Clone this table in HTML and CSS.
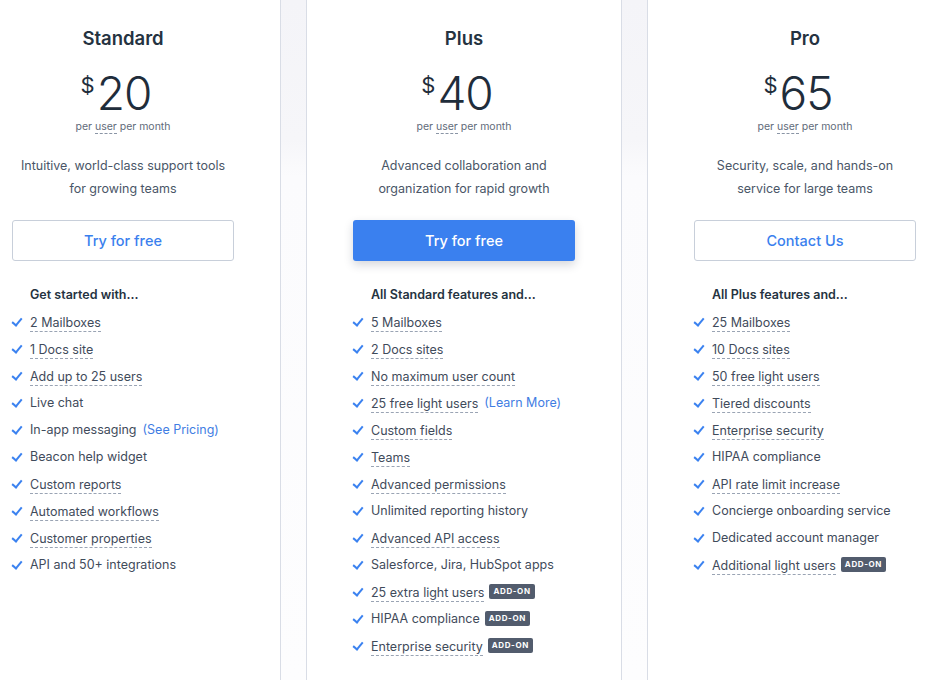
FILE: index.html
```html
<!DOCTYPE html>
<html>
<head>
<meta charset="utf-8">
<link rel="stylesheet" href="styles.css">
</head>
<body>
<div class="plans">
  <section class="card">
    <h2 class="name">Standard</h2>
    <div class="price"><span class="cur">$</span><span class="amt">20</span></div>
    <div class="per">per <span class="dash">user</span> per month</div>
    <p class="desc">Intuitive, world-class support tools<br>for growing teams</p>
    <a class="btn outline">Try for free</a>
    <h3 class="lead">Get started with...</h3>
    <ul class="feats">
      <li><span class="u">2 Mailboxes</span></li>
      <li><span class="u">1 Docs site</span></li>
      <li><span class="u">Add up to 25 users</span></li>
      <li>Live chat</li>
      <li>In-app messaging <a class="link">(See Pricing)</a></li>
      <li>Beacon help widget</li>
      <li><span class="u">Custom reports</span></li>
      <li><span class="u">Automated workflows</span></li>
      <li><span class="u">Customer properties</span></li>
      <li>API and 50+ integrations</li>
    </ul>
  </section>
  <section class="card">
    <h2 class="name">Plus</h2>
    <div class="price"><span class="cur">$</span><span class="amt">40</span></div>
    <div class="per">per <span class="dash">user</span> per month</div>
    <p class="desc">Advanced collaboration and<br>organization for rapid growth</p>
    <a class="btn solid">Try for free</a>
    <h3 class="lead">All Standard features and...</h3>
    <ul class="feats">
      <li><span class="u">5 Mailboxes</span></li>
      <li><span class="u">2 Docs sites</span></li>
      <li><span class="u">No maximum user count</span></li>
      <li><span class="u">25 free light users</span> <a class="link">(Learn More)</a></li>
      <li><span class="u">Custom fields</span></li>
      <li><span class="u">Teams</span></li>
      <li><span class="u">Advanced permissions</span></li>
      <li>Unlimited reporting history</li>
      <li><span class="u">Advanced API access</span></li>
      <li>Salesforce, Jira, HubSpot apps</li>
      <li><span class="u">25 extra light users</span><span class="addon">ADD-ON</span></li>
      <li>HIPAA compliance<span class="addon">ADD-ON</span></li>
      <li><span class="u">Enterprise security</span><span class="addon">ADD-ON</span></li>
    </ul>
  </section>
  <section class="card">
    <h2 class="name">Pro</h2>
    <div class="price"><span class="cur">$</span><span class="amt">65</span></div>
    <div class="per">per <span class="dash">user</span> per month</div>
    <p class="desc">Security, scale, and hands-on<br>service for large teams</p>
    <a class="btn outline">Contact Us</a>
    <h3 class="lead">All Plus features and...</h3>
    <ul class="feats">
      <li><span class="u">25 Mailboxes</span></li>
      <li><span class="u">10 Docs sites</span></li>
      <li><span class="u">50 free light users</span></li>
      <li><span class="u">Tiered discounts</span></li>
      <li><span class="u">Enterprise security</span></li>
      <li>HIPAA compliance</li>
      <li><span class="u">API rate limit increase</span></li>
      <li>Concierge onboarding service</li>
      <li>Dedicated account manager</li>
      <li><span class="u">Additional light users</span><span class="addon">ADD-ON</span></li>
    </ul>
  </section>
</div>
</body>
</html>
```
FILE: styles.css
```css
html, body {
  margin: 0;
  padding: 0;
  width: 930px;
  height: 680px;
  overflow: hidden;
}
body {
  font-family: Inter, "Noto Sans", sans-serif;
  color: #253341;
  background: linear-gradient(to bottom, #f4f4f8 0, #f6f6f9 140px, #fbfbfd 176px, #fdfdfe 100%);
}
.plans {
  display: flex;
  gap: 25px;
  margin-left: -35px;
  margin-top: -20px;
}
.card {
  width: 316px;
  flex: none;
  box-sizing: border-box;
  background: #fff;
  border: 1px solid #d9dde6;
  border-radius: 4px;
  padding: 45px 46px 40px 46px;
  height: 720px;
  display: flex;
  flex-direction: column;
  align-items: center;
}
.name {
  margin: 0;
  font-size: 18.5px;
  font-weight: 600;
  line-height: 24px;
  color: #253341;
}
.price {
  display: flex;
  align-items: flex-start;
  margin-top: 15px;
  margin-right: 14px;
  height: 54px;
  color: #1f2d3b;
}
.cur {
  font-size: 22px;
  line-height: 22px;
  margin-top: 9px;
  margin-right: 2px;
  font-weight: 400;
}
.amt {
  font-size: 46px;
  line-height: 56px;
  font-weight: 300;
  letter-spacing: -1px;
}
.per {
  font-size: 10.5px;
  line-height: 14px;
  color: #5f6b7a;
  margin-top: 1px;
}
.dash {
  border-bottom: 1px dashed #8a95a5;
}
.desc {
  margin: 20px 0 0;
  font-size: 12.5px;
  line-height: 23px;
  text-align: center;
  color: #4a5667;
}
.btn {
  display: flex;
  align-items: center;
  justify-content: center;
  box-sizing: border-box;
  width: 222px;
  height: 41px;
  margin-top: 20px;
  padding-bottom: 1px;
  border-radius: 3px;
  font-size: 14.5px;
  font-weight: 500;
}
.outline {
  border: 1px solid #c8cfda;
  color: #3a7fee;
}
.solid {
  background: #3a80ef;
  color: #fff;
  height: 42px;
  box-shadow: 0 4px 10px rgba(30, 40, 60, 0.18);
}
.lead {
  align-self: stretch;
  margin: 26px 0 0 18px;
  font-size: 12.5px;
  font-weight: 600;
  line-height: 16px;
  color: #253341;
}
.feats {
  align-self: stretch;
  list-style: none;
  margin: 5px 0 0;
  padding: 0;
}
.feats li {
  position: relative;
  padding-left: 18px;
  height: 27px;
  display: flex;
  align-items: center;
  font-size: 12.5px;
  color: #3f4b5b;
}
.feats li::before {
  content: "";
  position: absolute;
  left: 2px;
  top: 8px;
  width: 4px;
  height: 8px;
  border-right: 2px solid #3b82f0;
  border-bottom: 2px solid #3b82f0;
  transform: rotate(40deg);
}
.u {
  border-bottom: 1px dashed #9aa4b4;
  padding-bottom: 1px;
  margin-top: 3px;
}
.link {
  color: #3f7de3;
  margin-left: 6px;
}
.addon {
  display: inline-block;
  background: #525c6d;
  color: #fff;
  font-size: 8px;
  font-weight: 700;
  letter-spacing: 0.6px;
  line-height: 15px;
  padding: 0 4px;
  border-radius: 2px;
  margin-left: 5px;
  margin-bottom: 1px;
}
```
